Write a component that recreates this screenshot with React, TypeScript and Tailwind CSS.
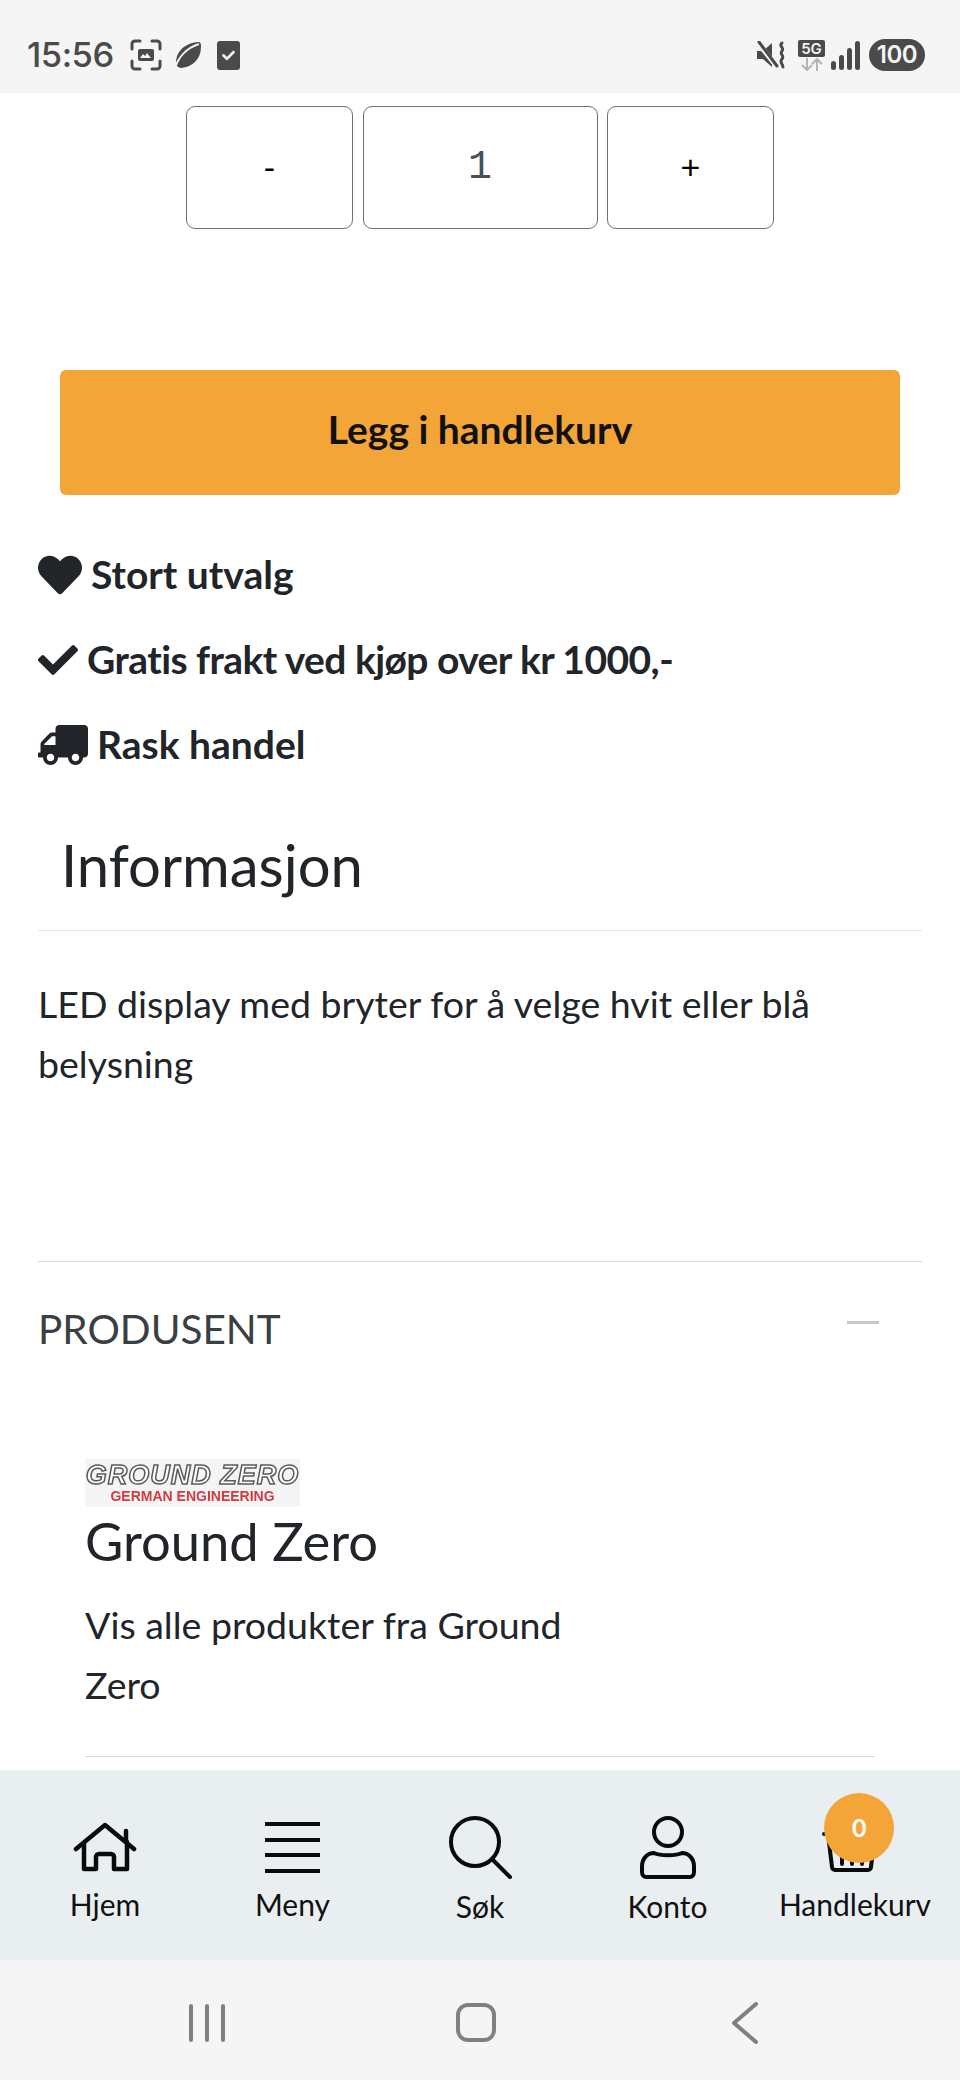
import { FaCheck, FaHeart, FaTruck } from "react-icons/fa"

const font = "font-['Lato','Noto_Sans',sans-serif]"

function StatusBar() {
  return (
    <div className="h-[93px] shrink-0 bg-[#f5f5f5] flex items-center justify-between pl-[27px] pr-[35px] pt-[17px]">
      <div className="flex items-center">
        <span className="font-['Inter',sans-serif] font-medium text-[34.5px] leading-none text-[#4a4a4a] tracking-[-0.5px]">15:56</span>
        <svg className="ml-[16px]" width="32" height="32" viewBox="0 0 32 32" fill="none" stroke="#4a4a4a" strokeWidth="3" strokeLinecap="round">
          <path d="M2 10V5a3 3 0 0 1 3-3h5M22 2h5a3 3 0 0 1 3 3v5M30 22v5a3 3 0 0 1-3 3h-5M10 30H5a3 3 0 0 1-3-3v-5" />
          <rect x="8" y="10" width="16" height="12" rx="2" fill="#4a4a4a" stroke="none" />
          <path d="M10 19l3-4 2 2 2-3 4 5z" fill="#f5f5f5" stroke="none" />
        </svg>
        <svg className="ml-[11px]" width="29" height="29" viewBox="0 0 28 28">
          <path d="M3 20C3 10 12 2 24 1c3 0 3 2 3 5 0 11-8 19-19 20-3 0-5-2-5-6z" fill="#4a4a4a" />
          <path d="M2 26C5 16 13 7 25 3" stroke="#f5f5f5" strokeWidth="2" fill="none" />
        </svg>
        <div className="ml-[15px] w-[23px] h-[29px] rounded-[3px] bg-[#4a4a4a] flex items-center justify-center">
          <FaCheck className="text-[#f5f5f5] text-[13px]" />
        </div>
      </div>
      <div className="flex items-center">
        <svg width="30" height="28" viewBox="0 0 30 28">
          <path d="M0 10h6l9-8v24l-9-8H0z" fill="#4a4a4a" />
          <path d="M1 2l19 24" stroke="#f5f5f5" strokeWidth="5" />
          <path d="M2 1l18 24" stroke="#4a4a4a" strokeWidth="3" strokeLinecap="round" />
          <path d="M25 2c-4 3 3 5 0 8s3 5 0 8 1 5 1 8" stroke="#4a4a4a" strokeWidth="3" fill="none" strokeLinecap="round" />
        </svg>
        <div className="ml-[11px] w-[27px] flex flex-col items-center">
          <div className="w-[27px] h-[17px] rounded-[2px] bg-[#4a4a4a] text-[#f5f5f5] font-['Inter',sans-serif] font-semibold text-[15px] leading-[17px] text-center">5G</div>
          <svg className="mt-[1px]" width="22" height="13" viewBox="0 0 22 13" fill="none" stroke="#b4b4b4" strokeWidth="2">
            <path d="M6 0v12M1 7l5 5 5-5M16 13V1M11 6l5-5 5 5" />
          </svg>
        </div>
        <svg className="ml-[6px]" width="29" height="29" viewBox="0 0 29 29" fill="#4a4a4a">
          <rect x="0" y="20" width="5" height="9" rx="2.5" />
          <rect x="8" y="14" width="5" height="15" rx="2.5" />
          <rect x="16" y="7" width="5" height="22" rx="2.5" />
          <rect x="24" y="0" width="5" height="29" rx="2.5" />
        </svg>
        <div className="ml-[9px] w-[56px] h-[32px] rounded-full bg-[#4a4a4a] text-[#f5f5f5] font-['Inter',sans-serif] font-semibold text-[24px] leading-[32px] text-center tracking-[-0.5px]">100</div>
      </div>
    </div>
  )
}

function Quantity() {
  const box = "h-[123px] bg-white border-[1.5px] border-[#707070] rounded-[9px] flex items-center justify-center"
  return (
    <div className="mt-[13px] flex justify-center gap-[9.5px]">
      <div className={`${box} w-[167px] text-black text-[34px] font-['Liberation_Sans',sans-serif]`}>-</div>
      <div className={`${box} w-[235px] text-[#495057] text-[40px] font-['Liberation_Mono',monospace]`}>1</div>
      <div className={`${box} w-[167px] text-black text-[34px] font-['Liberation_Sans',sans-serif]`}>+</div>
    </div>
  )
}

function Usp() {
  const row = "h-[85px] flex items-center text-[#212529] font-bold text-[39px] leading-none"
  return (
    <div className="mt-[37px] px-[38px]">
      <div className={row}>
        <FaHeart className="w-[44px] h-[44px] mr-[9px]" />
        <span>Stort utvalg</span>
      </div>
      <div className={row}>
        <FaCheck className="w-[40px] h-[40px] mr-[9px]" />
        <span className="tracking-[-0.55px]">Gratis frakt ved kjøp over kr 1000,-</span>
      </div>
      <div className={row}>
        <FaTruck className="w-[50px] h-[44px] mr-[9px] -scale-x-100" />
        <span>Rask handel</span>
      </div>
    </div>
  )
}

function BrandLogo() {
  return (
    <div className="w-[215px] h-[48px] bg-[#f4f4f4] flex flex-col items-center justify-center font-['Liberation_Sans',sans-serif] italic blur-[0.5px]">
      <span className="text-[27px] leading-[27px] font-bold tracking-[1px] text-white [-webkit-text-stroke:1.5px_#5a5a5a]">GROUND ZERO</span>
      <span className="text-[14px] leading-[15px] font-bold not-italic text-[#d23a3f]">GERMAN ENGINEERING</span>
    </div>
  )
}

function NavItem({ label, labelOffset, children }: { label: string; labelOffset?: string; children: React.ReactNode }) {
  return (
    <div className="relative w-[187.5px] flex flex-col items-center">
      <div className="h-[64px] flex items-end justify-center">{children}</div>
      <span className={`mt-[6px] text-[30px] leading-[40px] text-[#111111] ${labelOffset ?? ""}`}>{label}</span>
    </div>
  )
}

function BottomNav() {
  return (
    <div className={`h-[190px] shrink-0 bg-[#e9eff0] flex justify-center pt-[44px] ${font}`}>
      <NavItem label="Hjem">
        <svg className="mb-[6px]" width="64" height="50" viewBox="0 0 64 50" fill="none" stroke="#0a0a0a" strokeWidth="4.5" strokeLinecap="round" strokeLinejoin="round">
          <path d="M3 27L32 3l29 24" />
          <path d="M53 9v11" />
          <path d="M11 21v26h12V35a3 3 0 0 1 3-3h12a3 3 0 0 1 3 3v12h13V20" />
        </svg>
      </NavItem>
      <NavItem label="Meny">
        <svg className="mb-[5px]" width="55" height="51" viewBox="0 0 55 51" stroke="#0a0a0a" strokeWidth="4">
          <path d="M0 2h55M0 18h55M0 33h55M0 49h55" />
        </svg>
      </NavItem>
      <NavItem label="Søk" labelOffset="translate-y-[2px]">
        <svg className="-mb-[1px]" width="63" height="63" viewBox="0 0 63 63" fill="none" stroke="#0a0a0a" strokeWidth="4" strokeLinecap="round">
          <circle cx="26" cy="26" r="24" />
          <path d="M43 43l18 18" />
        </svg>
      </NavItem>
      <NavItem label="Konto" labelOffset="translate-y-[2px]">
        <svg className="-mb-[1px]" width="56" height="63" viewBox="0 0 56 63" fill="none" stroke="#0a0a0a" strokeWidth="4" strokeLinejoin="round">
          <circle cx="28" cy="16" r="14" />
          <path d="M14 37c6 3 22 3 28 0 7 0 12 6 12 13v6c0 3-2 5-4 5H6c-2 0-4-2-4-5v-6c0-7 5-13 12-13z" />
        </svg>
      </NavItem>
      <NavItem label="Handlekurv">
        <svg className="mb-[6px] -translate-x-[4px]" width="58" height="50" viewBox="0 0 58 50" fill="none" stroke="#0a0a0a" strokeWidth="4" strokeLinecap="round" strokeLinejoin="round">
          <path d="M2 12h4l4 33a3 3 0 0 0 3 3h33a3 3 0 0 0 3-3l4-33h2" />
          <path d="M20 34v8M30 34v8M40 34v8" />
        </svg>
        <div className="absolute left-[63px] -top-[21px] w-[70px] h-[70px] rounded-full bg-[#f4a537] text-white font-bold text-[25px] flex items-center justify-center">0</div>
      </NavItem>
    </div>
  )
}

function SystemNav() {
  return (
    <div className="h-[120px] shrink-0 bg-[#f5f5f5] flex items-center justify-center pt-[5px] pr-[8px]">
      <div className="w-[269px] flex justify-center">
        <div className="flex gap-[12px]">
          <div className="w-[4px] h-[38px] rounded-full bg-[#808080]" />
          <div className="w-[4px] h-[38px] rounded-full bg-[#808080]" />
          <div className="w-[4px] h-[38px] rounded-full bg-[#808080]" />
        </div>
      </div>
      <div className="w-[269px] flex justify-center">
        <div className="w-[40px] h-[39px] rounded-[12px] border-[4px] border-[#808080]" />
      </div>
      <div className="w-[269px] flex justify-center">
        <svg width="28" height="42" viewBox="0 0 28 42" fill="none" stroke="#808080" strokeWidth="4" strokeLinecap="round" strokeLinejoin="round">
          <path d="M25 2L3 21l22 19" />
        </svg>
      </div>
    </div>
  )
}

export default function App() {
  return (
    <div className={`w-[960px] h-[2080px] bg-white flex flex-col overflow-hidden ${font}`}>
      <StatusBar />
      <div className="flex-1 overflow-hidden">
        <Quantity />
        <div className="mt-[141px] mx-[60px] h-[125px] rounded-[6px] bg-[#f4a537] flex items-center justify-center pb-[6px] text-[#111111] font-bold text-[39px]">
          Legg i handlekurv
        </div>
        <Usp />
        <div className="mt-[43px] mx-[38px] h-[101px] border-b border-[#e6e6e6] pl-[23px] text-[#212529] text-[58px] leading-[70px]">Informasjon</div>
        <p className="mt-[43px] mx-[38px] text-[#212529] text-[37.5px] leading-[60px]">LED display med bryter for å velge hvit eller blå belysning</p>
        <div className="mt-[167px] mx-[38px] border-t border-[#dcdcdc] pt-[42px] flex items-center justify-between pr-[43px]">
          <span className="text-[#3a3f44] text-[40.5px] leading-[50px]">PRODUSENT</span>
          <div className="w-[32px] h-[3px] bg-[#c8c8c8] -mt-[14px]" />
        </div>
        <div className="mt-[105px] mx-[85px] border-b border-[#dcdcdc] h-[298px]">
          <BrandLogo />
          <div className="mt-[4px] text-[#212529] text-[52.5px] leading-[60px]">Ground Zero</div>
          <div className="mt-[24px] w-[500px] text-[#212529] text-[37.5px] leading-[60px]">Vis alle produkter fra Ground Zero</div>
        </div>
      </div>
      <BottomNav />
      <SystemNav />
    </div>
  )
}
